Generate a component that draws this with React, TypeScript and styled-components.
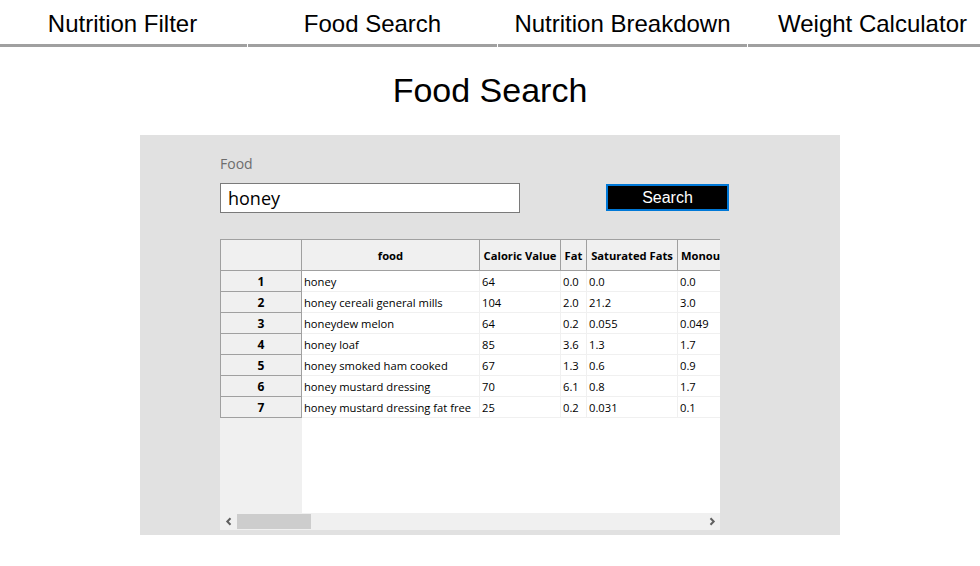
import React from 'react';
import styled, { createGlobalStyle } from 'styled-components';

const Global = createGlobalStyle`
  html, body { margin: 0; padding: 0; background: #ffffff; }
  body { font-family: "Liberation Sans", Arial, sans-serif; color: #000; }
`;

const Page = styled.div`
  width: 980px;
  overflow: hidden;
`;

const Nav = styled.nav`
  display: flex;
  gap: 1px;
  margin-left: -2px;
`;

const Tab = styled.div`
  flex: 0 0 249px;
  height: 44px;
  box-sizing: content-box;
  border-bottom: 3px solid #a0a0a0;
  display: flex;
  justify-content: center;
  align-items: flex-start;
  font-size: 24px;
  line-height: 28px;
  white-space: nowrap;
  & > span { margin-top: 10px; }
`;

const Title = styled.h1`
  margin: 24px 0 0;
  font-size: 34px;
  line-height: 39px;
  font-weight: normal;
  text-align: center;
`;

const Panel = styled.section`
  width: 700px;
  height: 400px;
  box-sizing: border-box;
  margin: 25px auto 0;
  background: #e1e1e1;
  padding: 19px 0 0 80px;
  display: flex;
  flex-direction: column;
`;

const Label = styled.label`
  font-family: "Open Sans", "Liberation Sans", sans-serif;
  font-size: 14px;
  line-height: 19px;
  color: #6d6d6d;
`;

const SearchRow = styled.div`
  display: flex;
  align-items: flex-start;
  margin-top: 10px;
`;

const Input = styled.input`
  width: 300px;
  height: 30px;
  box-sizing: border-box;
  border: 1px solid #7a7a7a;
  background: #fff;
  padding: 0 7px;
  font-family: "Open Sans", "Liberation Sans", sans-serif;
  font-size: 18px;
  color: #000;
  outline: none;
`;

const SearchButton = styled.button`
  margin: 1px 0 0 86px;
  width: 123px;
  height: 27px;
  box-sizing: border-box;
  border: 2px solid #0078d7;
  background: #000;
  color: #fff;
  font-family: "Liberation Sans", Arial, sans-serif;
  font-size: 16px;
  padding: 0;
  cursor: pointer;
`;

const Grid = styled.div`
  margin-top: 26px;
  width: 500px;
  height: 291px;
  background: #fff;
  display: flex;
  flex-direction: column;
  font-family: "Open Sans", "Liberation Sans", sans-serif;
  font-size: 11.2px;
`;

const GridBody = styled.div`
  flex: 1;
  display: flex;
  overflow: hidden;
`;

const IndexCol = styled.div`
  flex: 0 0 82px;
  background: #f0f0f0;
  display: flex;
  flex-direction: column;
`;

const Corner = styled.div`
  height: 32px;
  box-sizing: border-box;
  border: 1px solid #a0a0a0;
`;

const IndexCell = styled.div`
  height: 21px;
  box-sizing: border-box;
  border: 1px solid #a0a0a0;
  border-top: none;
  display: flex;
  align-items: center;
  justify-content: center;
  font-weight: bold;
  font-size: 12px;
`;

const DataCol = styled.div`
  flex: 1;
  overflow: hidden;
  display: flex;
  flex-direction: column;
`;

const HeaderRow = styled.div`
  display: flex;
  height: 32px;
  box-sizing: border-box;
  border-top: 1px solid #a0a0a0;
  border-bottom: 1px solid #a0a0a0;
  background: #f0f0f0;
`;

const HeaderCell = styled.div<{ $w: number }>`
  flex: 0 0 ${(p) => p.$w}px;
  box-sizing: border-box;
  border-right: 1px solid #a0a0a0;
  padding: 0 3px;
  display: flex;
  align-items: center;
  justify-content: safe center;
  font-weight: bold;
  white-space: nowrap;
  overflow: hidden;
`;

const Row = styled.div`
  display: flex;
  height: 21px;
`;

const Cell = styled.div<{ $w: number }>`
  flex: 0 0 ${(p) => p.$w}px;
  box-sizing: border-box;
  border-right: 1px solid #f0f0f0;
  border-bottom: 1px solid #f0f0f0;
  padding-left: 2px;
  display: flex;
  align-items: center;
  white-space: nowrap;
  overflow: hidden;
`;

const Scrollbar = styled.div`
  height: 17px;
  flex: 0 0 17px;
  background: #f0f0f0;
  display: flex;
  align-items: center;
`;

const ArrowBtn = styled.div`
  flex: 0 0 17px;
  height: 17px;
  display: flex;
  align-items: center;
  justify-content: center;
`;

const Track = styled.div`
  flex: 1;
  height: 15px;
  display: flex;
`;

const Thumb = styled.div`
  width: 74px;
  height: 15px;
  background: #cdcdcd;
`;

const widths = [178, 81, 26, 91, 90];
const headers = ['food', 'Caloric Value', 'Fat', 'Saturated Fats', 'Monounsaturated Fats'];
const rows: string[][] = [
  ['honey', '64', '0.0', '0.0', '0.0'],
  ['honey cereali general mills', '104', '2.0', '21.2', '3.0'],
  ['honeydew melon', '64', '0.2', '0.055', '0.049'],
  ['honey loaf', '85', '3.6', '1.3', '1.7'],
  ['honey smoked ham cooked', '67', '1.3', '0.6', '0.9'],
  ['honey mustard dressing', '70', '6.1', '0.8', '1.7'],
  ['honey mustard dressing fat free', '25', '0.2', '0.031', '0.1'],
];

const Chevron = ({ dir }: { dir: 'left' | 'right' }) => (
  <svg width="8" height="9" viewBox="0 0 8 9">
    <path
      d={dir === 'left' ? 'M5.5 1.2 L2.3 4.5 L5.5 7.8' : 'M2.5 1.2 L5.7 4.5 L2.5 7.8'}
      fill="none"
      stroke="#606060"
      strokeWidth="2"
    />
  </svg>
);

export default function App() {
  return (
    <Page>
      <Global />
      <Nav>
        {['Nutrition Filter', 'Food Search', 'Nutrition Breakdown', 'Weight Calculator'].map((t) => (
          <Tab key={t}>
            <span>{t}</span>
          </Tab>
        ))}
      </Nav>
      <Title>Food Search</Title>
      <Panel>
        <Label>Food</Label>
        <SearchRow>
          <Input defaultValue="honey" />
          <SearchButton>Search</SearchButton>
        </SearchRow>
        <Grid>
          <GridBody>
            <IndexCol>
              <Corner />
              {rows.map((_, i) => (
                <IndexCell key={i}>{i + 1}</IndexCell>
              ))}
            </IndexCol>
            <DataCol>
              <HeaderRow>
                {headers.map((h, i) => (
                  <HeaderCell key={h} $w={widths[i]}>
                    {h}
                  </HeaderCell>
                ))}
              </HeaderRow>
              {rows.map((r, i) => (
                <Row key={i}>
                  {r.map((c, j) => (
                    <Cell key={j} $w={widths[j]}>
                      {c}
                    </Cell>
                  ))}
                </Row>
              ))}
            </DataCol>
          </GridBody>
          <Scrollbar>
            <ArrowBtn>
              <Chevron dir="left" />
            </ArrowBtn>
            <Track>
              <Thumb />
            </Track>
            <ArrowBtn>
              <Chevron dir="right" />
            </ArrowBtn>
          </Scrollbar>
        </Grid>
      </Panel>
    </Page>
  );
}
